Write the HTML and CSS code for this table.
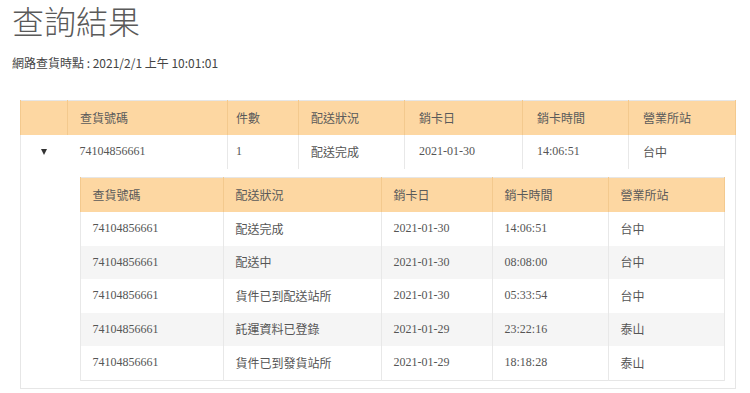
FILE: index.html
```html
<!DOCTYPE html>
<html lang="zh-Hant">
<head>
<meta charset="utf-8">
<title>查詢結果</title>
<link rel="stylesheet" href="styles.css">
</head>
<body>
<div class="page">
  <h1 class="title">查詢結果</h1>
  <p class="subtitle">網路查貨時點 : 2021/2/1 上午 10:01:01</p>

  <table class="outer">
    <colgroup>
      <col style="width:47px"><col style="width:160px"><col style="width:71px"><col style="width:106px"><col style="width:118px"><col style="width:106px"><col style="width:107px">
    </colgroup>
    <thead>
      <tr>
        <th></th><th>查貨號碼</th><th class="narrow">件數</th><th>配送狀況</th><th class="wide">銷卡日</th><th class="wide">銷卡時間</th><th class="wide">營業所站</th>
      </tr>
    </thead>
    <tbody>
      <tr class="main-row">
        <td class="toggle"><span class="caret"></span></td>
        <td>74104856661</td>
        <td class="narrow">1</td>
        <td>配送完成</td>
        <td class="wide">2021-01-30</td>
        <td class="wide">14:06:51</td>
        <td class="wide">台中</td>
      </tr>
      <tr class="detail-row">
        <td></td>
        <td colspan="6" class="detail">
          <table class="inner">
            <colgroup>
              <col style="width:143px"><col style="width:158px"><col style="width:111px"><col style="width:116px"><col style="width:116px">
            </colgroup>
            <thead>
              <tr><th>查貨號碼</th><th>配送狀況</th><th>銷卡日</th><th>銷卡時間</th><th>營業所站</th></tr>
            </thead>
            <tbody>
              <tr><td>74104856661</td><td>配送完成</td><td>2021-01-30</td><td>14:06:51</td><td>台中</td></tr>
              <tr><td>74104856661</td><td>配送中</td><td>2021-01-30</td><td>08:08:00</td><td>台中</td></tr>
              <tr><td>74104856661</td><td>貨件已到配送站所</td><td>2021-01-30</td><td>05:33:54</td><td>台中</td></tr>
              <tr><td>74104856661</td><td>託運資料已登錄</td><td>2021-01-29</td><td>23:22:16</td><td>泰山</td></tr>
              <tr><td>74104856661</td><td>貨件已到發貨站所</td><td>2021-01-29</td><td>18:18:28</td><td>泰山</td></tr>
            </tbody>
          </table>
        </td>
      </tr>
    </tbody>
  </table>
</div>
</body>
</html>
```

FILE: styles.css
```css
html, body {
  margin: 0;
  padding: 0;
  background: #ffffff;
}

.page {
  padding: 0 12px;
  font-family: "Noto Sans CJK TC", "Noto Sans", sans-serif;
  color: #444;
}

.title {
  margin: -3px 0 0;
  font-size: 32px;
  line-height: 46px;
  font-weight: 300;
  color: #5a5a5a;
}

.subtitle {
  margin: 12px 0 0;
  font-size: 12px;
  line-height: 16px;
  color: #444;
}

.outer {
  margin: 29px 0 0 8px;
  width: 715px;
  table-layout: fixed;
  border-collapse: collapse;
  border: 1px solid #e6e6e6;
}

.outer > thead > tr > th,
.inner > thead > tr > th {
  background: #fdd7a2;
  height: 34px;
  padding: 0 12px;
  text-align: left;
  font-weight: 400;
  font-size: 12px;
  color: #5a5a5a;
  border-left: 1px solid #f3c98e;
  border-right: 1px solid #f3c98e;
}

.outer > thead > tr > th {
  height: 33.5px;
}

.outer > thead > tr > th.narrow,
.outer > tbody > tr > td.narrow {
  padding-left: 8px;
}

.outer > thead > tr > th.wide,
.outer > tbody > tr > td.wide {
  padding-left: 14px;
}

.main-row > td {
  height: 34px;
  padding: 0 12px;
  font-family: "Liberation Serif", "Noto Sans CJK TC", serif;
  font-size: 12px;
  color: #555;
  border-left: 1px solid #e8e8e8;
}

.main-row > td.toggle {
  text-align: center;
  padding: 0;
}

.main-row > td:nth-child(2) {
  border-left: none;
}

.caret {
  display: inline-block;
  width: 0;
  height: 0;
  border-left: 3.5px solid transparent;
  border-right: 3.5px solid transparent;
  border-top: 6px solid #333;
  vertical-align: middle;
}

.detail {
  padding: 8px 12px 7px;
}

.inner {
  width: 644px;
  table-layout: fixed;
  border-collapse: collapse;
  border: 1px solid #e6e6e6;
}

.inner > tbody > tr > td {
  height: 34px;
  padding: 0 12px;
  font-family: "Liberation Serif", "Noto Sans CJK TC", serif;
  font-size: 12px;
  color: #555;
  border-left: 1px solid #e8e8e8;
  border-right: 1px solid #e8e8e8;
}

.inner > tbody > tr:nth-child(even) > td {
  height: 33px;
  background: #f5f5f5;
}
```
